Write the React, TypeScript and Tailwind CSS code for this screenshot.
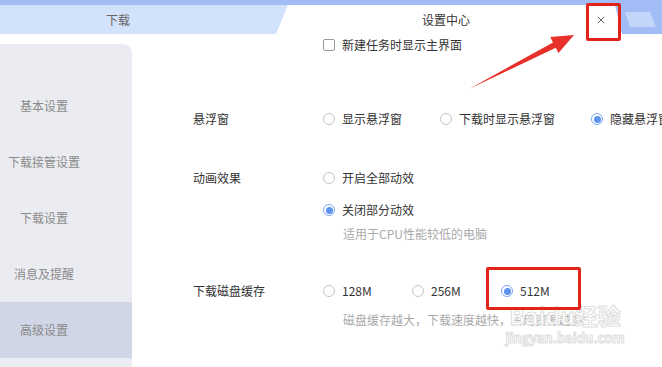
import { X } from "lucide-react";

const font = { fontFamily: '"Noto Sans CJK SC", "Noto Sans", sans-serif' };

function Radio({ checked = false }: { checked?: boolean }) {
  return (
    <span
      className={`flex h-[12px] w-[12px] shrink-0 items-center justify-center rounded-full border ${
        checked ? "border-[#7aa5f2]" : "border-[#c4c4c4]"
      } bg-white`}
    >
      {checked ? <span className="h-[7px] w-[7px] rounded-full bg-[#5e92ef]" /> : null}
    </span>
  );
}

function Option({ label, checked, width }: { label: string; checked?: boolean; width?: string }) {
  return (
    <div className={`flex items-center gap-[7px] ${width ?? ""}`}>
      <Radio checked={checked} />
      <span className="whitespace-nowrap text-[12px] leading-[20px] text-[#333]">{label}</span>
    </div>
  );
}

const menu = ["基本设置", "下载接管设置", "下载设置", "消息及提醒", "高级设置"];

export default function App() {
  return (
    <div className="relative h-[367px] w-[662px] overflow-hidden bg-white" style={font}>
      {/* tab bar */}
      <header className="flex h-[34px] bg-[#a2bcf5] pt-[5px]">
        <div className="flex h-[29px] w-[290px] shrink-0 items-center bg-[#d3e2fb] pl-[106px] text-[12px] text-[#666]">
          下载
        </div>
        <div className="relative -ml-[14px] flex h-[29px] w-[346px] shrink-0 items-center bg-white [clip-path:polygon(12px_0,339px_0,346px_100%,0_100%)]">
          <span className="ml-[146px] text-[12px] text-[#333]">设置中心</span>
          <button className="ml-auto mr-[15px] flex h-[12px] w-[12px] items-center justify-center text-[#333]">
            <X size={12} strokeWidth={1.5} />
          </button>
        </div>
        <div className="ml-[3px] mt-[7px] h-[15px] w-[31px] bg-[#c4d5fa] [clip-path:polygon(0_0,25px_0,31px_100%,5px_100%)]" />
      </header>

      <div className="flex">
        {/* sidebar */}
        <nav className="mt-[10px] h-[323px] w-[132px] shrink-0 rounded-tr-[9px] bg-[#ebecf1] pt-[34px]">
          {menu.map((item) => (
            <div
              key={item}
              className={`flex h-[56px] w-[132px] items-center ${item === "高级设置" ? "bg-[#d1d6e6]" : ""}`}
            >
              <span className="w-[88px] text-center text-[12px] text-[#8a8a8a]">{item}</span>
            </div>
          ))}
        </nav>

        {/* content */}
        <main className="flex flex-1 flex-col pt-[1px]">
          <div className="flex items-center gap-[7px] pl-[191px]">
            <span className="h-[12px] w-[12px] rounded-[2px] border border-[#999] bg-white" />
            <span className="text-[12px] leading-[20px] text-[#333]">新建任务时显示主界面</span>
          </div>

          <div className="mt-[54px] flex pl-[61px]">
            <span className="w-[130px] text-[12px] leading-[20px] text-[#333]">悬浮窗</span>
            <div className="flex">
              <Option label="显示悬浮窗" width="w-[117px]" />
              <Option label="下载时显示悬浮窗" width="w-[151px]" />
              <Option label="隐藏悬浮窗" checked />
            </div>
          </div>

          <div className="mt-[39px] flex pl-[61px]">
            <span className="w-[130px] text-[12px] leading-[20px] text-[#333]">动画效果</span>
            <div className="flex flex-col">
              <Option label="开启全部动效" />
              <div className="mt-[12px]">
                <Option label="关闭部分动效" checked />
              </div>
              <span className="mt-[4px] pl-[20px] text-[12px] leading-[20px] text-[#aaa]">
                适用于CPU性能较低的电脑
              </span>
            </div>
          </div>

          <div className="mt-[37px] flex pl-[61px]">
            <span className="w-[130px] text-[12px] leading-[20px] text-[#333]">下载磁盘缓存</span>
            <div className="flex flex-col">
              <div className="flex">
                <Option label="128M" width="w-[89px]" />
                <Option label="256M" width="w-[89px]" />
                <Option label="512M" checked />
              </div>
              <span className="mt-[9px] whitespace-nowrap pl-[20px] text-[12px] leading-[20px] text-[#aaa]">
                磁盘缓存越大，下载速度越快，占用资源越多
              </span>
            </div>
          </div>
        </main>
      </div>

      {/* watermark */}
      <div className="pointer-events-none absolute left-[504px] top-[300px] flex w-[122px] flex-col items-center text-white/80 [-webkit-text-stroke:1px_#dedede]">
        <span className="text-[23px] font-bold leading-[30px]">Baidu经验</span>
        <span className="text-[13px] font-bold leading-[16px]">jingyan.baidu.com</span>
      </div>

      {/* annotations */}
      <div className="pointer-events-none absolute left-[586px] top-[3px] h-[38px] w-[35px] rounded-[2px] border-[3px] border-[#e2231a]" />
      <div className="pointer-events-none absolute left-[486px] top-[267px] h-[43px] w-[95px] rounded-[2px] border-[3px] border-[#e2231a]" />
      <svg className="pointer-events-none absolute left-0 top-0" width="662" height="367">
        <polygon
          points="469,89 553,42.4 550.3,37.1 574,35 558.5,53.1 555.8,47.8"
          fill="#e8302a"
        />
      </svg>
    </div>
  );
}
